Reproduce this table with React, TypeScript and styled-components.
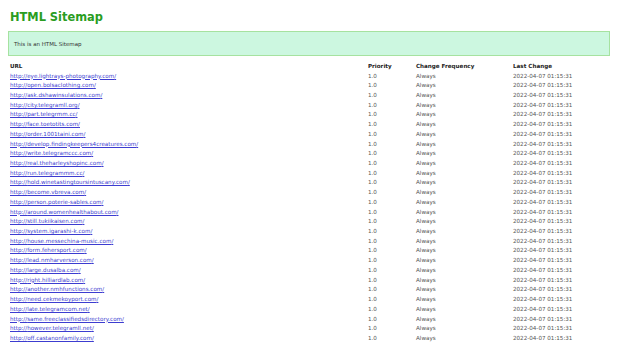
import React from "react";
import styled, { createGlobalStyle } from "styled-components";

const GlobalStyle = createGlobalStyle`
    html, body {
        margin: 0;
        padding: 0;
        background: #ffffff;
    }
    body {
        padding: 8px 10px 0 8px;
        font-family: "DejaVu Sans", Verdana, sans-serif;
    }
`;

const Page = styled.main`
    width: 602px;
`;

const Title = styled.h1`
    margin: 0;
    padding: 1px 0 0 2px;
    height: 22px;
    box-sizing: border-box;
    font-size: 11.4px;
    font-weight: bold;
    line-height: 16px;
    color: #2a9d22;
`;

const Intro = styled.div`
    box-sizing: border-box;
    margin-top: 1px;
    height: 25px;
    display: flex;
    align-items: center;
    padding-left: 5px;
    background: #ccf7e0;
    border: 1.5px solid #a6e2a0;
    font-size: 5.5px;
    color: #333333;
`;

const Table = styled.table`
    margin-top: 5px;
    width: 602px;
    border-collapse: collapse;
    table-layout: fixed;
    font-size: 5.6px;
`;

const HeadCell = styled.th<{ $w: number }>`
    width: ${(p) => p.$w}px;
    padding: 0 0 0 2px;
    height: 9.7px;
    text-align: left;
    font-weight: bold;
    color: #222222;
`;

const Cell = styled.td`
    padding: 0 0 0 2px;
    height: 9.72px;
    color: #555555;
    white-space: nowrap;
`;

const Link = styled.a`
    color: #3c3cd0;
    text-decoration: underline;
`;

const urls = [
    "eye.lightrays-photography.com",
    "open.bolsaclothing.com",
    "ask.dshawinsulations.com",
    "city.telegramll.org",
    "part.telegrmm.cc",
    "face.toetotits.com",
    "order.1001taini.com",
    "develop.findingkeepers4creatures.com",
    "write.telegramccc.com",
    "real.theharleyshopinc.com",
    "run.telegrammm.cc",
    "hold.winetastingtoursintuscany.com",
    "become.vbreva.com",
    "person.poterie-sables.com",
    "around.womenhealthabout.com",
    "still.tukiikaisen.com",
    "system.igarashi-k.com",
    "house.messechina-music.com",
    "form.fehersport.com",
    "lead.nmharverson.com",
    "large.dusalba.com",
    "right.hilliardlab.com",
    "another.nmhfunctions.com",
    "need.cekmekoyport.com",
    "late.telegramcom.net",
    "same.freeclassifiedsdirectory.com",
    "however.telegramll.net",
    "off.castanonfamily.com",
];

export default function App() {
    return (
        <>
            <GlobalStyle />
            <Page>
                <Title>HTML Sitemap</Title>
                <Intro>This is an HTML Sitemap</Intro>
                <Table>
                    <thead>
                        <tr>
                            <HeadCell $w={356}>URL</HeadCell>
                            <HeadCell $w={46}>Priority</HeadCell>
                            <HeadCell $w={95}>Change Frequency</HeadCell>
                            <HeadCell $w={97}>Last Change</HeadCell>
                        </tr>
                    </thead>
                    <tbody>
                        {urls.map((u) => (
                            <tr key={u}>
                                <Cell>
                                    <Link href={`http://${u}/`}>http://{u}/</Link>
                                </Cell>
                                <Cell>1.0</Cell>
                                <Cell>Always</Cell>
                                <Cell>2022-04-07 01:15:31</Cell>
                            </tr>
                        ))}
                    </tbody>
                </Table>
            </Page>
        </>
    );
}
